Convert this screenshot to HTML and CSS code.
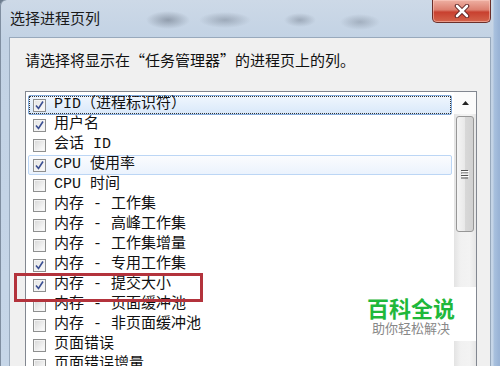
FILE: index.html
```html
<!DOCTYPE html>
<html lang="zh-CN">
<head>
    <meta charset="UTF-8">
    <meta name="viewport" content="width=device-width, initial-scale=1.0">
    <title>选择进程页列</title>
    <link rel="stylesheet" href="styles.css">
</head>
<body>
    <div class="window">
        <div class="titlebar">
            <span class="title">选择进程页列</span>
            <div class="close">
                <svg width="18" height="14" viewBox="0 0 18 14">
                    <path d="M4 2 L14 12 M14 2 L4 12" stroke="#5a2020" stroke-width="4.5" stroke-linecap="round"/>
                    <path d="M4 2 L14 12 M14 2 L4 12" stroke="#ffffff" stroke-width="2.6" stroke-linecap="round"/>
                </svg>
            </div>
        </div>
        <div class="client">
            <p class="prompt">请选择将显示在“任务管理器”的进程页上的列。</p>
            <div class="listbox">
                <ul class="items">
                    <li class="item selected"><span class="box checked"><svg width="11" height="11" viewBox="0 0 11 11"><path d="M2 5.5 L4.5 8.5 L9 1.5" fill="none" stroke="#3b4f92" stroke-width="1.6"/></svg></span>PID（进程标识符）</li>
                    <li class="item"><span class="box checked"><svg width="11" height="11" viewBox="0 0 11 11"><path d="M2 5.5 L4.5 8.5 L9 1.5" fill="none" stroke="#3b4f92" stroke-width="1.6"/></svg></span>用户名</li>
                    <li class="item"><span class="box"></span>会话 ID</li>
                    <li class="item hover"><span class="box checked"><svg width="11" height="11" viewBox="0 0 11 11"><path d="M2 5.5 L4.5 8.5 L9 1.5" fill="none" stroke="#3b4f92" stroke-width="1.6"/></svg></span>CPU 使用率</li>
                    <li class="item"><span class="box"></span>CPU 时间</li>
                    <li class="item"><span class="box"></span>内存 - 工作集</li>
                    <li class="item"><span class="box"></span>内存 - 高峰工作集</li>
                    <li class="item"><span class="box"></span>内存 - 工作集增量</li>
                    <li class="item"><span class="box checked"><svg width="11" height="11" viewBox="0 0 11 11"><path d="M2 5.5 L4.5 8.5 L9 1.5" fill="none" stroke="#3b4f92" stroke-width="1.6"/></svg></span>内存 - 专用工作集</li>
                    <li class="item"><span class="box checked"><svg width="11" height="11" viewBox="0 0 11 11"><path d="M2 5.5 L4.5 8.5 L9 1.5" fill="none" stroke="#3b4f92" stroke-width="1.6"/></svg></span>内存 - 提交大小</li>
                    <li class="item"><span class="box"></span>内存 - 页面缓冲池</li>
                    <li class="item"><span class="box"></span>内存 - 非页面缓冲池</li>
                    <li class="item"><span class="box"></span>页面错误</li>
                    <li class="item"><span class="box"></span>页面错误增量</li>
                </ul>
                <div class="scrollbar">
                    <div class="scroll-btn">
                        <svg width="7" height="4" viewBox="0 0 7 4"><path d="M0 4 L3.5 0 L7 4 Z" fill="#222"/></svg>
                    </div>
                    <div class="thumb">
                        <svg width="8" height="9" viewBox="0 0 8 9">
                            <path d="M0 0.5 H7 M0 3 H7 M0 5.5 H7 M0 8 H7" stroke="#555" stroke-width="1"/>
                            <path d="M1 1.5 H8 M1 4 H8 M1 6.5 H8" stroke="#fff" stroke-width="1"/>
                        </svg>
                    </div>
                </div>
            </div>
        </div>
        <div class="highlight"></div>
        <div class="watermark">
            <div class="wm-title">百科全说</div>
            <div class="wm-sub">助你轻松解决</div>
        </div>
    </div>
</body>
</html>
```

FILE: styles.css
```css
body {
    margin: 0;
    width: 500px;
    height: 366px;
    overflow: hidden;
    font-family: "Noto Sans CJK SC", sans-serif;
    color: #000;
    background: #6d7d8f;
}

.window {
    position: relative;
    height: 366px;
    overflow: hidden;
    border-top-left-radius: 6px;
    background:
        linear-gradient(to right, transparent 493px, #a9c1de 494px, #9ab4d6 499px),
        linear-gradient(#cdd9e7, #c2d2e4 40px, #c6d6e8);
    box-shadow: inset 1px 0 0 #7f8ea0;
}

.titlebar {
    display: flex;
    align-items: flex-start;
    height: 37px;
    background:
        radial-gradient(ellipse 22px 9px at 168px 20px, rgba(80, 90, 105, 0.45), transparent),
        radial-gradient(ellipse 26px 8px at 225px 20px, rgba(80, 90, 105, 0.35), transparent),
        radial-gradient(ellipse 16px 7px at 300px 20px, rgba(80, 90, 105, 0.35), transparent),
        radial-gradient(ellipse 20px 8px at 360px 22px, rgba(80, 90, 105, 0.3), transparent);
}

.title {
    padding: 9px 0 0 10px;
    font-size: 15px;
    line-height: 18px;
    color: #1a1a1a;
}

.close {
    display: flex;
    justify-content: center;
    align-items: center;
    margin-left: auto;
    margin-right: 9px;
    width: 57px;
    height: 22px;
    border: 1px solid #6b2f2a;
    border-top: none;
    border-radius: 0 0 5px 5px;
    background: linear-gradient(#eeb0a3, #dc7f6f 45%, #c8402f 55%, #d4644c);
    box-shadow: inset 0 0 0 1px rgba(255, 210, 200, 0.5);
}

.client {
    box-sizing: border-box;
    margin: 0 9px;
    height: 329px;
    padding: 12px 13px 0 15px;
    border: 1px solid #98a9bc;
    border-bottom: none;
    background: #f0f0f0;
}

.prompt {
    margin: 0 0 21px;
    font-size: 15px;
    line-height: 20px;
    color: #111;
}

.listbox {
    display: flex;
    height: 290px;
    border: 1px solid #828790;
    border-bottom: none;
    background: #fff;
}

.items {
    flex: 1;
    margin: 0;
    padding: 3px 2px 0 2px;
    list-style: none;
}

.item {
    display: flex;
    align-items: center;
    height: 18px;
    padding: 0 0 0 4px;
    border: 1px solid transparent;
    border-radius: 2px;
    font-family: "Liberation Mono", "Noto Sans CJK SC", monospace;
    font-size: 15px;
    line-height: 18px;
    color: #111;
    white-space: pre;
}

.item.selected {
    border-color: #84acdd;
    background: linear-gradient(#f0f6fd, #d8e8fa);
    outline: 1px dotted #333;
    outline-offset: -2px;
}

.item.hover {
    border-color: #bcd6f5;
    background: linear-gradient(#fbfcfe, #ebf3fd);
}

.box {
    display: flex;
    justify-content: center;
    align-items: center;
    flex: none;
    width: 11px;
    height: 11px;
    margin-right: 8px;
    border: 1px solid #8e8f8f;
    background: linear-gradient(135deg, #d6d6d6, #f4f4f4 70%, #fdfdfd);
    box-shadow: inset 0 0 0 1px #f4f4f4;
}

.box.checked {
    background: linear-gradient(135deg, #e4e4e4, #fbfbfb);
}

.scrollbar {
    display: flex;
    flex-direction: column;
    align-items: center;
    width: 22px;
    background: linear-gradient(to right, #e3e3e3, #f1f1f1 30%, #f3f3f3 70%, #e6e6e6);
}

.scroll-btn {
    display: flex;
    justify-content: center;
    align-items: center;
    width: 22px;
    height: 22px;
    background: #fbfbfb;
}

.thumb {
    display: flex;
    justify-content: center;
    align-items: center;
    width: 16px;
    height: 114px;
    margin-top: 2px;
    border: 1px solid #979797;
    border-radius: 3px;
    background: linear-gradient(to right, #f5f5f5, #e8e8e8 50%, #d8d8d8 51%, #d1d1d1);
}

.highlight {
    position: absolute;
    left: 14px;
    top: 273px;
    width: 183px;
    height: 23px;
    border: 3px solid #b3333c;
}

.watermark {
    position: absolute;
    left: 346px;
    top: 287px;
    width: 130px;
    height: 54px;
    background: #fff;
    text-align: center;
}

.wm-title {
    margin-top: 9px;
    font-size: 22px;
    font-weight: bold;
    line-height: 22px;
    color: #1fb83b;
}

.wm-sub {
    margin-top: 3px;
    font-size: 13px;
    line-height: 14px;
    color: #888;
}
```
